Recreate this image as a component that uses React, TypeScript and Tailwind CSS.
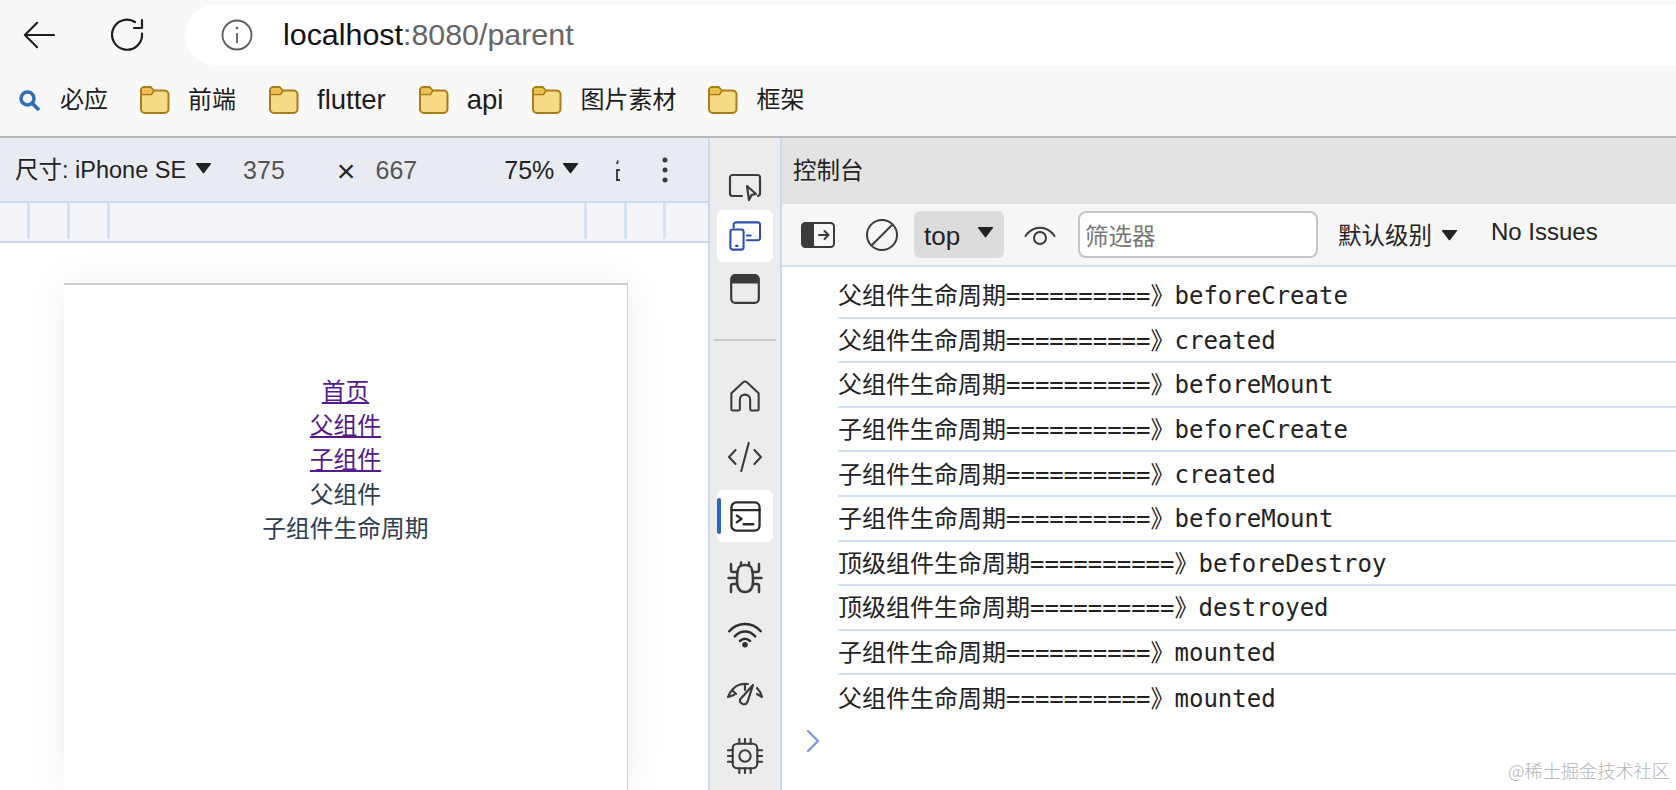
const sans = "font-['Liberation_Sans','Noto_Sans_CJK_SC',sans-serif]"
const mono = "font-['DejaVu_Sans_Mono','Noto_Sans_CJK_SC',monospace]"

function Folder() {
  return (
    <svg width="32" height="30" viewBox="0 0 32 30" className="shrink-0">
      <path d="M2 5.500a3.500 3.500 0 0 1 3.500-3.500h6l3 3.500h11a4 4 0 0 1 4 4V24a4 4 0 0 1-4 4H6a4 4 0 0 1-4-4z" fill="#f8dc85" stroke="#a97c1b" strokeWidth="2" strokeLinejoin="round" />
      <path d="M3 5.500a2.500 2.500 0 0 1 2.500-2.500h5.500l3 2.500-2 3H3z" fill="#eec04f" />
      <path d="M2 9.500h10.500l2.500-4" fill="none" stroke="#a97c1b" strokeWidth="1.600" />
    </svg>
  )
}

function Caret({ className }: { className: string }) {
  return (
    <svg width="17" height="12" viewBox="0 0 18 13" className={className}>
      <path d="M1.500 1h15a.8.8 0 0 1 .6 1.300L9.700 12a.9.9 0 0 1-1.400 0L.9 2.300A.8.8 0 0 1 1.500 1z" fill="#222" />
    </svg>
  )
}

function Bookmark({ label, latin, className }: { label: string; latin?: boolean; className?: string }) {
  return (
    <div className={`flex items-center gap-[17px] ${className ?? ""}`}>
      <Folder />
      <span className={latin ? "text-[27.500px] text-[#1c1c1c]" : "text-[24px] text-[#1c1c1c]"}>{label}</span>
    </div>
  )
}

function SideIcon({ children, tile, h }: { children: React.ReactNode; tile?: boolean; h: string }) {
  return <div className={`flex items-center justify-center ${h} ${tile ? "mx-[7px] rounded-md bg-white" : ""}`}>{children}</div>
}

function SideRail() {
  const s = { fill: "none", stroke: "#3b3b3b", strokeWidth: 2.2, strokeLinecap: "round" as const, strokeLinejoin: "round" as const }
  return (
    <div className="-ml-[1px] flex w-[74px] shrink-0 flex-col border-x-[2px] border-[#c8daf2] bg-[#ececec]">
      <SideIcon h="mt-[28px] h-[44px]">
        <svg width="34" height="30" viewBox="0 0 34 30" {...s}>
          <path d="M14 23H4.500A2.500 2.500 0 0 1 2 20.500V4.500A2.500 2.500 0 0 1 4.500 2h25A2.500 2.500 0 0 1 32 4.500v16a2.500 2.500 0 0 1-2 2.400" />
          <path d="M19 13l9 8-4.500 1-2.500 5z" />
        </svg>
      </SideIcon>
      <SideIcon tile h="h-[52px]">
        <svg width="32" height="32" viewBox="0 0 34 32" fill="none" stroke="#2e50ad" strokeWidth="2.200" strokeLinecap="round" strokeLinejoin="round">
          <path d="M5 7V4a2.500 2.500 0 0 1 2.500-2.500h23A2.500 2.500 0 0 1 33 4v14a2.500 2.500 0 0 1-2.500 2.500H19" />
          <rect x="1.500" y="9" width="14" height="21.500" rx="2.500" />
          <path d="M19 15.500h4M7.500 26.500h1.500" />
        </svg>
      </SideIcon>
      <SideIcon h="mt-[9px] h-[36px]">
        <svg width="30" height="30" viewBox="0 0 30 30">
          <rect x="1.200" y="1.200" width="27.600" height="27.600" rx="4" fill="none" stroke="#3b3b3b" strokeWidth="2.200" />
          <path d="M1.200 5a4 4 0 0 1 4-4h19.600a4 4 0 0 1 4 4v4.500H1.200z" fill="#3b3b3b" />
        </svg>
      </SideIcon>
      <div className="mx-[4px] mt-[32px] h-[2px] bg-[#c9c9c9]" />
      <SideIcon h="mt-[35px] h-[40px]">
        <svg width="32" height="34" viewBox="0 0 34 34" {...s}>
          <path d="M2.500 14L15 2.500a3 3 0 0 1 4 0L31.500 14v17a1.500 1.500 0 0 1-1.500 1.500h-6a1.500 1.500 0 0 1-1.500-1.500V21a5.500 5.500 0 0 0-11 0v10a1.500 1.500 0 0 1-1.500 1.500H4A1.500 1.500 0 0 1 2.500 31z" />
        </svg>
      </SideIcon>
      <SideIcon h="mt-[20px] h-[42px]">
        <svg width="36" height="32" viewBox="0 0 38 34" {...s}>
          <path d="M9 9.500L2 17l7 7.500M29 9.500l7 7.500-7 7.500M23 2l-8 30" />
        </svg>
      </SideIcon>
      <SideIcon tile h="relative mt-[12px] h-[52px]">
        <div className="absolute left-0 top-[8px] h-[36px] w-[4px] rounded-sm bg-[#2c66c4]" />
        <svg width="31" height="31" viewBox="0 0 32 32" fill="none" stroke="#2b2b2b" strokeWidth="2.400" strokeLinecap="round" strokeLinejoin="round">
          <rect x="1.500" y="1.500" width="29" height="29" rx="5" />
          <path d="M1.500 9.500h29M7 15l5 3.500-5 3.500M14 24h10" />
        </svg>
      </SideIcon>
      <SideIcon h="mt-[17px] h-[36px]">
        <svg width="36" height="33" viewBox="0 0 36 33" fill="none" stroke="#3b3b3b" strokeWidth="2.500" strokeLinecap="round" strokeLinejoin="round">
          <path d="M11 9c0-3 3-5 7-5s7 2 7 5c1 3 1 6 1 11 0 7-3 11-8 11s-8-4-8-11c0-5 0-8 1-11z" />
          <path d="M14 4V1.500M22 4V1.500M10 11H6a2 2 0 0 1-2-2V3M26 11h4a2 2 0 0 0 2-2V3M1.500 17H10M26 17h8.500M10 23H6a2 2 0 0 0-2 2v6M26 23h4a2 2 0 0 1 2 2v6" />
        </svg>
      </SideIcon>
      <SideIcon h="mt-[24px] h-[32px]">
        <svg width="36" height="26" viewBox="0 0 38 28" fill="none" stroke="#2f2f2f" strokeWidth="2.600" strokeLinecap="round" strokeLinejoin="round">
          <path d="M2 10C11-.500 27-.500 36 10M8 15.500c6.500-7 15.500-7 22 0M13.500 20.500c3.500-3 7.500-3 11 0" />
          <circle cx="19" cy="24.500" r="3" fill="#2f2f2f" stroke="none" />
        </svg>
      </SideIcon>
      <SideIcon h="mt-[27px] h-[32px]">
        <svg width="38" height="25" viewBox="0 0 38 25" {...s}>
          <path d="M2 15C4 9 9 4 14 2.500c2-.7 5-.8 8-.5M31 6c2 2 4 5 5 9M19 2v6M2 15l6-2M6 8l4 4M36 15l-5-3" />
          <path d="M27 3L21.500 20a4 4 0 0 1-7.500-2.500z" />
        </svg>
      </SideIcon>
      <SideIcon h="mt-[27px] h-[38px]">
        <svg width="36" height="36" viewBox="0 0 38 38" {...s}>
          <rect x="6" y="6" width="26" height="26" rx="5" />
          <circle cx="19" cy="19" r="6" />
          <path d="M13 1v5M19 1v5M25 1v5M13 32v5M19 32v5M25 32v5M1 13h5M1 19h5M1 25h5M32 13h5M32 19h5M32 25h5" />
        </svg>
      </SideIcon>
    </div>
  )
}

const logs: [string, string][] = [
  ["父组件", "beforeCreate"],
  ["父组件", "created"],
  ["父组件", "beforeMount"],
  ["子组件", "beforeCreate"],
  ["子组件", "created"],
  ["子组件", "beforeMount"],
  ["顶级组件", "beforeDestroy"],
  ["顶级组件", "destroyed"],
  ["子组件", "mounted"],
  ["父组件", "mounted"],
]

function Console() {
  return (
    <div className="flex min-w-0 flex-1 flex-col bg-white">
      <div className="flex h-[66px] shrink-0 items-center bg-[#e3e3e3] pl-[11px] pt-[2px] text-[23.500px] text-[#222]">控制台</div>
      <div className="flex h-[63px] shrink-0 items-center border-b-[2px] border-[#cfe0f3] bg-[#f6f6f6]">
        <svg width="34" height="26" viewBox="0 0 34 26" className="ml-[19px] shrink-0">
          <rect x="1" y="1" width="32" height="24" rx="3.500" fill="none" stroke="#3b3b3b" strokeWidth="2" />
          <path d="M1 4.500A3.500 3.500 0 0 1 4.500 1H13v24H4.500A3.500 3.500 0 0 1 1 21.500z" fill="#3b3b3b" />
          <path d="M18 13h9M23.500 9l4 4-4 4" fill="none" stroke="#3b3b3b" strokeWidth="2" strokeLinecap="round" strokeLinejoin="round" />
        </svg>
        <svg width="34" height="34" viewBox="0 0 34 34" className="ml-[30px] shrink-0" fill="none" stroke="#3b3b3b" strokeWidth="2">
          <circle cx="17" cy="17" r="15" />
          <path d="M6.500 27.500l21-21" />
        </svg>
        <div className="ml-[15px] flex h-[47px] w-[90px] shrink-0 items-center rounded-md bg-[#dcdcdc] pl-[10px] text-[26px] text-[#222]">
          <span className="pt-[3px]">top</span>
          <Caret className="ml-[17px] -mt-[6px]" />
        </div>
        <svg width="32" height="22" viewBox="0 0 32 22" className="ml-[20px] shrink-0" fill="none" stroke="#3b3b3b" strokeWidth="2" strokeLinecap="round">
          <path d="M1.500 12C9 1 23 1 30.500 12" />
          <circle cx="16" cy="14" r="6" />
        </svg>
        <div className="ml-[22px] flex h-[47px] w-[240px] shrink-0 items-center rounded-lg border-[2px] border-[#c4c4c4] bg-white pl-[5px] pt-[6px] text-[23.500px] text-[#777]">筛选器</div>
        <span className="ml-[20px] shrink-0 pt-[5px] text-[23.500px] text-[#222]">默认级别</span>
        <Caret className="ml-[9px] shrink-0" />
        <span className="ml-[33px] -mt-[6px] shrink-0 text-[24px] text-[#222]">No Issues</span>
      </div>
      <div className="pl-[56px] pt-[7px]">
        {logs.map(([who, hook], i) => (
          <div key={i} className={`${mono} flex h-[44.600px] items-center whitespace-pre border-b-[2px] border-[#cfe0f3] pt-[2px] text-[24px] text-[#222] last:border-b-0`}>
            {who}生命周期==========》{hook}
          </div>
        ))}
      </div>
      <svg width="14" height="24" viewBox="0 0 14 24" className="ml-[24px] mt-[9px]" fill="none" stroke="#7c93e0" strokeWidth="2.200" strokeLinecap="round" strokeLinejoin="round">
        <path d="M2 2l10 10L2 22" />
      </svg>
    </div>
  )
}

export default function App() {
  return (
    <div className={`${sans} relative flex h-[790px] w-[1676px] flex-col overflow-hidden bg-white`}>
      <div className="h-[138px] shrink-0 border-b-[2px] border-[#b9b9b9] bg-[#f8f8f8]">
        <div className="flex h-[68px] items-center pt-[1px]">
          <svg width="32" height="30" viewBox="0 0 34 30" className="ml-[23px] shrink-0" fill="none" stroke="#1d1d1d" strokeWidth="2.200" strokeLinecap="round" strokeLinejoin="round">
            <path d="M33 15H2M15 2L2 15l13 13" />
          </svg>
          <svg width="34" height="34" viewBox="0 0 34 34" className="ml-[56px] shrink-0" fill="none" stroke="#1d1d1d" strokeWidth="2.200" strokeLinecap="round" strokeLinejoin="round">
            <path d="M31 15.500A15 15 0 1 1 24 4M31 2v8h-8" />
          </svg>
          <div className="ml-[40px] flex h-[60px] flex-1 items-center rounded-l-[30px] bg-white pl-[36px]">
            <svg width="32" height="32" viewBox="0 0 32 32" className="shrink-0" fill="none" stroke="#5d5d5d" strokeWidth="1.800">
              <circle cx="16" cy="16" r="14.500" />
              <path d="M16 14v10" />
              <circle cx="16" cy="9" r="1.300" fill="#5d5d5d" stroke="none" />
            </svg>
            <span className="ml-[30px] text-[30.400px] text-[#666]"><span className="text-[#111]">localhost</span>:8080/parent</span>
          </div>
        </div>
        <div className="flex h-[60px] items-center pt-[4px]">
          <svg width="22" height="22" viewBox="0 0 22 22" className="ml-[18px] shrink-0" fill="none" stroke="#2f6db5" strokeWidth="3.500" strokeLinecap="round">
            <circle cx="9.500" cy="9.500" r="6.500" />
            <path d="M15 15l5 5" />
          </svg>
          <span className="ml-[20px] text-[24px] text-[#1c1c1c]">必应</span>
          <div className="ml-[31px] flex items-center gap-[32px]">
            <Bookmark label="前端" />
            <Bookmark label="flutter" latin />
            <Bookmark label="api" latin className="-mr-[4px]" />
            <Bookmark label="图片素材" className="-mr-[1px]" />
            <Bookmark label="框架" />
          </div>
        </div>
      </div>

      <div className="flex min-h-0 flex-1">
        <div className="flex w-[709px] shrink-0 flex-col bg-white">
          <div className="flex h-[65px] shrink-0 items-center border-b-[2px] border-[#c8daf2] bg-[#e9ebf3] pt-[2px] text-[25px] text-[#222]">
            <span className="ml-[15px] text-[23.500px]">尺寸: iPhone SE</span>
            <Caret className="ml-[9px] -mt-[6px] shrink-0" />
            <span className="ml-[31px] text-[#555]">375</span>
            <span className="ml-[52px] text-[32px] leading-none text-[#222]">×</span>
            <span className="ml-[20px] text-[#555]">667</span>
            <span className="ml-[87px]">75%</span>
            <Caret className="ml-[8px] -mt-[6px] shrink-0" />
            <svg width="6" height="24" viewBox="0 0 6 24" className="ml-[36px] shrink-0" fill="none" stroke="#333" strokeWidth="1.800">
              <path d="M3 1.500L2 5M5 11H2v10h3" />
            </svg>
            <svg width="6" height="26" viewBox="0 0 6 26" className="ml-[41px] -mt-[2px] shrink-0" fill="#3b3b3b">
              <circle cx="3" cy="3" r="2.500" />
              <circle cx="3" cy="13" r="2.500" />
              <circle cx="3" cy="23" r="2.500" />
            </svg>
          </div>
          <div className="flex h-[40px] shrink-0 border-b-[2px] border-[#c8daf2] bg-[#f3f5fb] pl-[27px]">
            <div className="h-[36px] w-[3px] bg-[#d3e2f6]" />
            <div className="ml-[37px] h-[36px] w-[3px] bg-[#d3e2f6]" />
            <div className="ml-[37px] h-[36px] w-[3px] bg-[#d3e2f6]" />
            <div className="ml-[474px] h-[36px] w-[3px] bg-[#d3e2f6]" />
            <div className="ml-[37px] h-[36px] w-[3px] bg-[#d3e2f6]" />
            <div className="ml-[36px] h-[36px] w-[3px] bg-[#d3e2f6]" />
          </div>
          <div className="min-h-0 flex-1 pl-[64px] pt-[40px]">
            <div className="flex h-full w-[564px] flex-col items-center border-r border-t-[2px] border-[#cfcfcf] bg-white pt-[90px] text-[23.750px] leading-[34.200px] text-[#2c3e50] shadow-[0_0_40px_rgba(0,0,0,0.07)]">
              <a className="text-[#551a8b] underline">首页</a>
              <a className="text-[#551a8b] underline">父组件</a>
              <a className="text-[#551a8b] underline">子组件</a>
              <div>父组件</div>
              <div>子组件生命周期</div>
            </div>
          </div>
        </div>
        <SideRail />
        <Console />
      </div>
      <div className="absolute bottom-[6px] right-[6px] font-['Noto_Sans_CJK_SC',sans-serif] text-[18.200px] font-light text-[#b4b4b4]">@稀土掘金技术社区</div>
    </div>
  )
}
